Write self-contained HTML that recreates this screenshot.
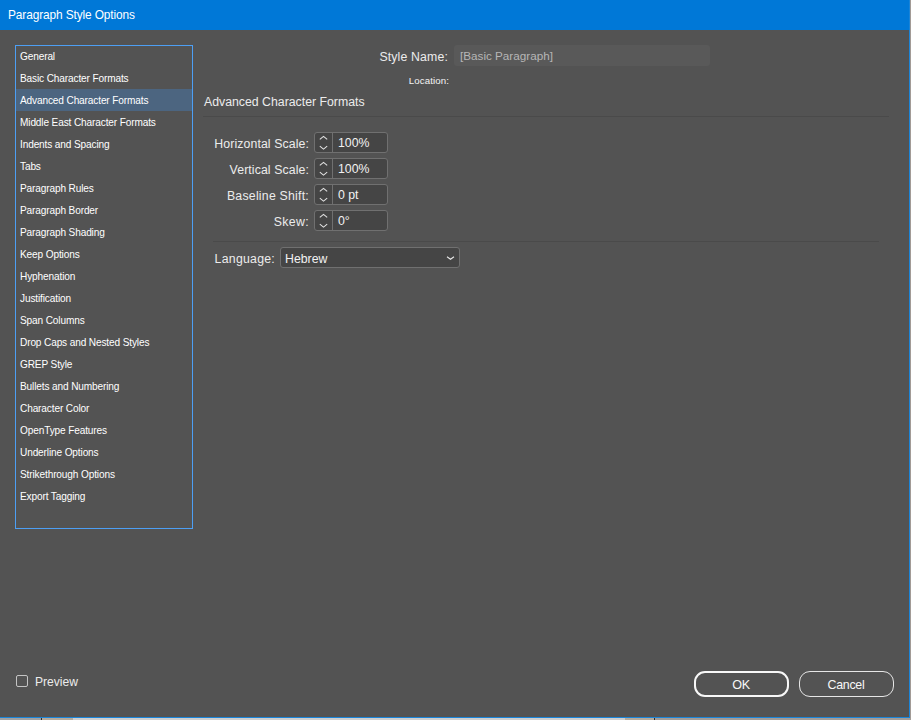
<!DOCTYPE html>
<html>
<head>
<meta charset="utf-8">
<style>
*{box-sizing:border-box;margin:0;padding:0}
html,body{width:911px;height:720px;overflow:hidden;background:#a39b94;font-family:"Liberation Sans",sans-serif}
.r{position:absolute}
.t{position:absolute;white-space:nowrap;line-height:20px;height:20px}
</style>
</head>
<body>
<div class="r" style="left:910px;top:0px;width:1px;height:720px;background:#a29b96;"></div>
<div class="r" style="left:0px;top:718px;width:911px;height:2px;background:#cfcfcf;"></div>
<div class="r" style="left:0px;top:718px;width:41px;height:2px;background:#a2a2a2;"></div>
<div class="r" style="left:41px;top:718px;width:1px;height:2px;background:#2b2b2b;"></div>
<div class="r" style="left:42px;top:718px;width:31px;height:2px;background:#b6ab9c;"></div>
<div class="r" style="left:625px;top:718px;width:29px;height:2px;background:#b6ab9c;"></div>
<div class="r" style="left:654px;top:718px;width:1px;height:2px;background:#2b2b2b;"></div>
<div class="r" style="left:655px;top:718px;width:256px;height:2px;background:#a39d98;"></div>
<div class="r" style="left:0px;top:0px;width:910px;height:718px;background:#1a84d8;"></div>
<div class="r" style="left:0px;top:0px;width:909px;height:30px;background:#0078d7;"></div>
<div class="r" style="left:0px;top:30px;width:909px;height:687px;background:#535353;"></div>
<div class="t" style="left:8px;top:5px;font-size:11.9px;color:#ffffff;font-weight:normal;letter-spacing:-0.12px">Paragraph Style Options</div>
<div class="r" style="left:15px;top:45px;width:178px;height:484px;background:transparent;border:1px solid #4d9ff4"></div>
<div class="r" style="left:16px;top:89px;width:176px;height:22px;background:#4c6580;"></div>
<div class="t" style="left:20px;top:47px;font-size:10.1px;color:#ffffff;font-weight:normal;letter-spacing:-0.135px">General</div>
<div class="t" style="left:20px;top:69px;font-size:10.1px;color:#ffffff;font-weight:normal;letter-spacing:-0.135px">Basic Character Formats</div>
<div class="t" style="left:20px;top:91px;font-size:10.1px;color:#ffffff;font-weight:normal;letter-spacing:-0.135px">Advanced Character Formats</div>
<div class="t" style="left:20px;top:113px;font-size:10.1px;color:#ffffff;font-weight:normal;letter-spacing:-0.135px">Middle East Character Formats</div>
<div class="t" style="left:20px;top:135px;font-size:10.1px;color:#ffffff;font-weight:normal;letter-spacing:-0.135px">Indents and Spacing</div>
<div class="t" style="left:20px;top:157px;font-size:10.1px;color:#ffffff;font-weight:normal;letter-spacing:-0.135px">Tabs</div>
<div class="t" style="left:20px;top:179px;font-size:10.1px;color:#ffffff;font-weight:normal;letter-spacing:-0.135px">Paragraph Rules</div>
<div class="t" style="left:20px;top:201px;font-size:10.1px;color:#ffffff;font-weight:normal;letter-spacing:-0.135px">Paragraph Border</div>
<div class="t" style="left:20px;top:223px;font-size:10.1px;color:#ffffff;font-weight:normal;letter-spacing:-0.135px">Paragraph Shading</div>
<div class="t" style="left:20px;top:245px;font-size:10.1px;color:#ffffff;font-weight:normal;letter-spacing:-0.135px">Keep Options</div>
<div class="t" style="left:20px;top:267px;font-size:10.1px;color:#ffffff;font-weight:normal;letter-spacing:-0.135px">Hyphenation</div>
<div class="t" style="left:20px;top:289px;font-size:10.1px;color:#ffffff;font-weight:normal;letter-spacing:-0.135px">Justification</div>
<div class="t" style="left:20px;top:311px;font-size:10.1px;color:#ffffff;font-weight:normal;letter-spacing:-0.135px">Span Columns</div>
<div class="t" style="left:20px;top:333px;font-size:10.1px;color:#ffffff;font-weight:normal;letter-spacing:-0.135px">Drop Caps and Nested Styles</div>
<div class="t" style="left:20px;top:355px;font-size:10.1px;color:#ffffff;font-weight:normal;letter-spacing:-0.135px">GREP Style</div>
<div class="t" style="left:20px;top:377px;font-size:10.1px;color:#ffffff;font-weight:normal;letter-spacing:-0.135px">Bullets and Numbering</div>
<div class="t" style="left:20px;top:399px;font-size:10.1px;color:#ffffff;font-weight:normal;letter-spacing:-0.135px">Character Color</div>
<div class="t" style="left:20px;top:421px;font-size:10.1px;color:#ffffff;font-weight:normal;letter-spacing:-0.135px">OpenType Features</div>
<div class="t" style="left:20px;top:443px;font-size:10.1px;color:#ffffff;font-weight:normal;letter-spacing:-0.135px">Underline Options</div>
<div class="t" style="left:20px;top:465px;font-size:10.1px;color:#ffffff;font-weight:normal;letter-spacing:-0.135px">Strikethrough Options</div>
<div class="t" style="left:20px;top:487px;font-size:10.1px;color:#ffffff;font-weight:normal;letter-spacing:-0.135px">Export Tagging</div>
<div class="t" style="right:463px;top:47px;font-size:12.3px;color:#ececec;font-weight:normal;letter-spacing:0.15px">Style Name:</div>
<div class="r" style="left:454px;top:45px;width:256px;height:21px;background:#595959;border-radius:3px"></div>
<div class="t" style="left:460px;top:46px;font-size:11.7px;color:#b6b6b6;font-weight:normal;">[Basic Paragraph]</div>
<div class="t" style="right:462px;top:71px;font-size:9.7px;color:#f4f4f4;font-weight:normal;letter-spacing:0.1px">Location:</div>
<div class="t" style="left:204px;top:92px;font-size:12.3px;color:#ececec;font-weight:normal;">Advanced Character Formats</div>
<div class="r" style="left:203px;top:116px;width:686px;height:1px;background:#4a4a4a;"></div>
<div class="t" style="right:602px;top:134px;font-size:12.3px;color:#ececec;font-weight:normal;letter-spacing:0.1px">Horizontal Scale:</div>
<div class="r" style="left:314px;top:132px;width:74px;height:21px;background:#454545;border:1px solid #707070;border-radius:3px"></div>
<div class="r" style="left:332px;top:132px;width:1px;height:21px;background:#707070;"></div>
<svg class="r" style="left:314px;top:132px" width="18" height="21" viewBox="0 0 18 21"><path d="M5.8 7.3 L9.5 4.4 L13.2 7.3 M5.8 14.2 L9.5 17.1 L13.2 14.2" fill="none" stroke="#e4e4e4" stroke-width="1.05"/></svg>
<div class="t" style="left:338px;top:133px;font-size:12.3px;color:#f2f2f2;font-weight:normal;">100%</div>
<div class="t" style="right:602px;top:160px;font-size:12.3px;color:#ececec;font-weight:normal;letter-spacing:0.1px">Vertical Scale:</div>
<div class="r" style="left:314px;top:158px;width:74px;height:21px;background:#454545;border:1px solid #707070;border-radius:3px"></div>
<div class="r" style="left:332px;top:158px;width:1px;height:21px;background:#707070;"></div>
<svg class="r" style="left:314px;top:158px" width="18" height="21" viewBox="0 0 18 21"><path d="M5.8 7.3 L9.5 4.4 L13.2 7.3 M5.8 14.2 L9.5 17.1 L13.2 14.2" fill="none" stroke="#e4e4e4" stroke-width="1.05"/></svg>
<div class="t" style="left:338px;top:159px;font-size:12.3px;color:#f2f2f2;font-weight:normal;">100%</div>
<div class="t" style="right:602px;top:186px;font-size:12.3px;color:#ececec;font-weight:normal;letter-spacing:0.23px">Baseline Shift:</div>
<div class="r" style="left:314px;top:184px;width:74px;height:21px;background:#454545;border:1px solid #707070;border-radius:3px"></div>
<div class="r" style="left:332px;top:184px;width:1px;height:21px;background:#707070;"></div>
<svg class="r" style="left:314px;top:184px" width="18" height="21" viewBox="0 0 18 21"><path d="M5.8 7.3 L9.5 4.4 L13.2 7.3 M5.8 14.2 L9.5 17.1 L13.2 14.2" fill="none" stroke="#e4e4e4" stroke-width="1.05"/></svg>
<div class="t" style="left:338px;top:185px;font-size:12.3px;color:#f2f2f2;font-weight:normal;">0 pt</div>
<div class="t" style="right:602px;top:212px;font-size:12.3px;color:#ececec;font-weight:normal;letter-spacing:0.34px">Skew:</div>
<div class="r" style="left:314px;top:210px;width:74px;height:21px;background:#454545;border:1px solid #707070;border-radius:3px"></div>
<div class="r" style="left:332px;top:210px;width:1px;height:21px;background:#707070;"></div>
<svg class="r" style="left:314px;top:210px" width="18" height="21" viewBox="0 0 18 21"><path d="M5.8 7.3 L9.5 4.4 L13.2 7.3 M5.8 14.2 L9.5 17.1 L13.2 14.2" fill="none" stroke="#e4e4e4" stroke-width="1.05"/></svg>
<div class="t" style="left:338px;top:211px;font-size:12.3px;color:#f2f2f2;font-weight:normal;">0°</div>
<div class="r" style="left:213px;top:241px;width:666px;height:1px;background:#4a4a4a;"></div>
<div class="t" style="right:636px;top:249px;font-size:12.3px;color:#ececec;font-weight:normal;letter-spacing:0.25px">Language:</div>
<div class="r" style="left:280px;top:247px;width:180px;height:21px;background:#454545;border:1px solid #707070;border-radius:3px"></div>
<div class="t" style="left:285px;top:249px;font-size:12.3px;color:#f2f2f2;font-weight:normal;">Hebrew</div>
<svg class="r" style="left:440px;top:247px" width="20" height="21" viewBox="0 0 20 21"><path d="M7 9.8 L10.5 12.3 L14 9.8" fill="none" stroke="#e8e8e8" stroke-width="1.1"/></svg>
<div class="r" style="left:16px;top:675px;width:12px;height:12px;background:transparent;border:1px solid #c4c4c4;border-radius:2px"></div>
<div class="t" style="left:35px;top:672px;font-size:12.1px;color:#ececec;font-weight:normal;">Preview</div>
<div class="r" style="left:694px;top:671px;width:95px;height:26px;background:transparent;border:2px solid #f8f8f8;border-radius:11px"></div>
<div class="t" style="left:641px;width:200px;text-align:center;top:675px;font-size:12.6px;color:#f8f8f8;font-weight:normal;letter-spacing:-0.4px">OK</div>
<div class="r" style="left:799px;top:671px;width:95px;height:26px;background:transparent;border:1px solid #e6e6e6;border-radius:11px"></div>
<div class="t" style="left:746px;width:200px;text-align:center;top:675px;font-size:12.4px;color:#f8f8f8;font-weight:normal;letter-spacing:-0.3px">Cancel</div>
</body>
</html>
